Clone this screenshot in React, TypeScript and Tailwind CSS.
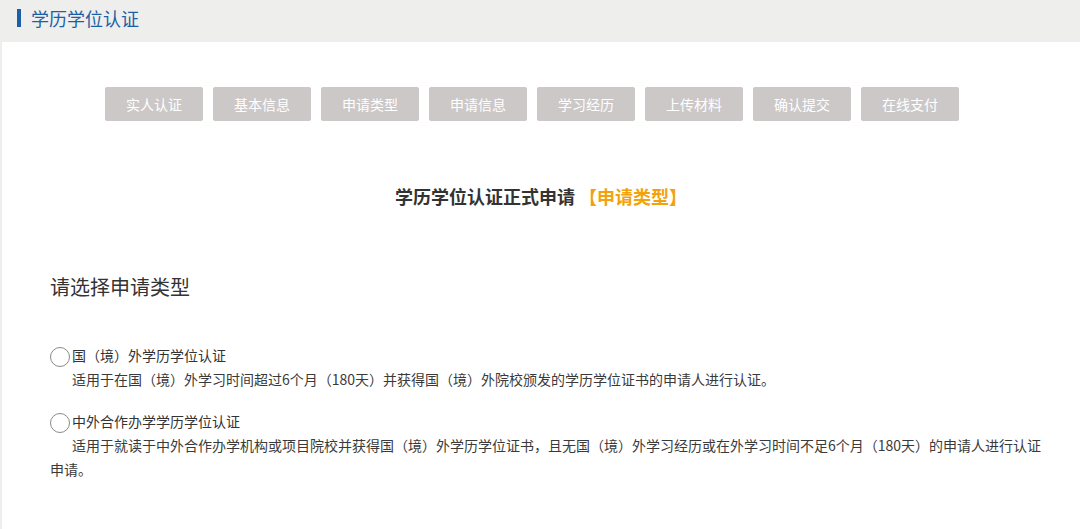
const steps = ["实人认证", "基本信息", "申请类型", "申请信息", "学习经历", "上传材料", "确认提交", "在线支付"];

const options = [
  {
    title: "国（境）外学历学位认证",
    desc: "适用于在国（境）外学习时间超过6个月（180天）并获得国（境）外院校颁发的学历学位证书的申请人进行认证。",
  },
  {
    title: "中外合作办学学历学位认证",
    desc: "适用于就读于中外合作办学机构或项目院校并获得国（境）外学历学位证书，且无国（境）外学习经历或在外学习时间不足6个月（180天）的申请人进行认证申请。",
  },
];

export default function App() {
  return (
    <div
      className="min-h-[529px] w-[1080px] bg-[#eeeeec] text-[#333]"
      style={{ fontFamily: '"Noto Sans CJK SC", "Noto Sans", sans-serif' }}
    >
      {/* page title */}
      <header className="flex h-[42px] items-center pl-[17px] pb-[6px]">
        <span className="h-[18px] w-[4px] bg-[#1d5fa6]" />
        <h1 className="ml-[10px] text-[18px] leading-none text-[#1d5fa6]">学历学位认证</h1>
      </header>

      <main className="ml-[2px] min-h-[487px] bg-white pt-[45px]">
        {/* steps */}
        <div className="ml-[103px] flex gap-[10px]">
          {steps.map((s) => (
            <div
              key={s}
              className="flex h-[34px] w-[98px] items-center justify-center rounded-[2px] bg-[#ccc8c8] text-[14px] text-white"
            >
              {s}
            </div>
          ))}
        </div>

        <h2 className="mt-[62px] text-center text-[18px] font-semibold leading-[26px] text-[#333]">
          学历学位认证正式申请 <span className="text-[#f2a20c]">【申请类型】</span>
        </h2>

        <section className="mt-[64px] pl-[48px] pr-[30px]">
          <h3 className="text-[20px] leading-[28px] text-[#333]">请选择申请类型</h3>

          <div className="mt-[42px] flex flex-col gap-[18px]">
            {options.map((o) => (
              <div key={o.title}>
                <label className="flex items-center text-[14px] leading-[24px] text-[#333]">
                  <span className="mt-[4px] h-[20px] w-[20px] shrink-0 rounded-full border border-[#8a8a8a] bg-white" />
                  <span className="ml-[2px]">{o.title}</span>
                </label>
                <p className="indent-[22px] text-[14px] leading-[24px] text-[#3a3a3a]">{o.desc}</p>
              </div>
            ))}
          </div>
        </section>
      </main>
    </div>
  );
}
